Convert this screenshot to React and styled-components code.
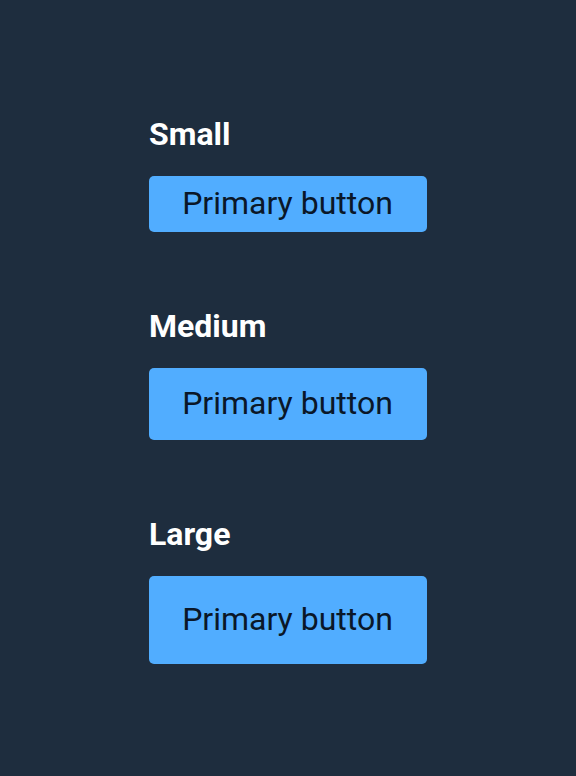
import React from "react";
import styled, { createGlobalStyle } from "styled-components";

const GlobalStyle = createGlobalStyle`
  html, body {
    margin: 0;
    padding: 0;
    background-color: #1e2d3e;
  }
  body {
    font-family: Roboto, "Liberation Sans", sans-serif;
  }
`;

const Page = styled.div`
  min-height: 776px;
  box-sizing: border-box;
  padding: 116px 0 0 149px;
  display: flex;
  flex-direction: column;
  gap: 76px;
`;

const Section = styled.section`
  display: flex;
  flex-direction: column;
  align-items: flex-start;
  gap: 23px;
`;

const Heading = styled.h2`
  margin: 0;
  font-size: 32px;
  font-weight: 700;
  color: #ffffff;
  line-height: 37px;
`;

const heights = { small: 56, medium: 72, large: 88 };

const PrimaryButton = styled.button`
  width: 278px;
  height: ${props => heights[props.size]}px;
  border: none;
  border-radius: 5px;
  background-color: #51adff;
  color: #0a1728;
  font-family: Roboto, "Liberation Sans", sans-serif;
  font-size: 32px;
  font-weight: 400;
  padding: 0 1px 2px 0;
  cursor: pointer;
`;

const sizes = [
  { key: "small", label: "Small" },
  { key: "medium", label: "Medium" },
  { key: "large", label: "Large" }
];

const App = () => {
  return (
    <>
      <GlobalStyle />
      <Page>
        {sizes.map(s => (
          <Section key={s.key}>
            <Heading>{s.label}</Heading>
            <PrimaryButton size={s.key}>Primary button</PrimaryButton>
          </Section>
        ))}
      </Page>
    </>
  );
};

export default App;
